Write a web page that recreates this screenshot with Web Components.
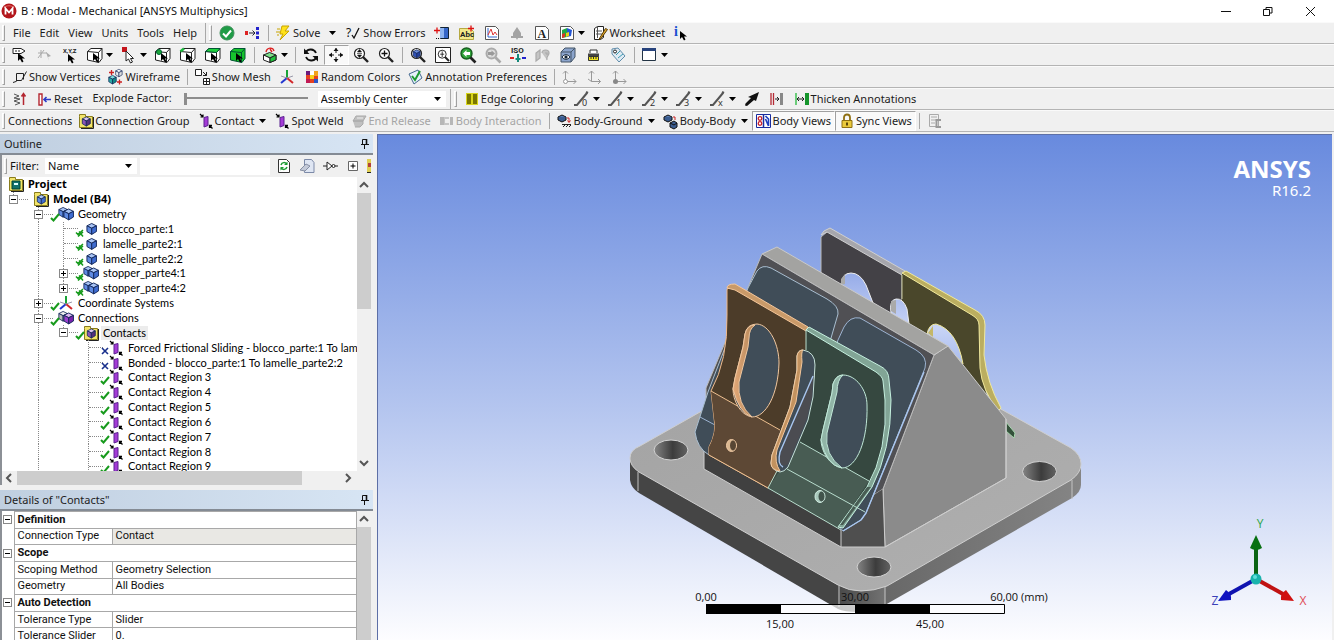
<!DOCTYPE html>
<html lang="en">
<head>
<meta charset="utf-8">
<title>B : Modal - Mechanical [ANSYS Multiphysics]</title>
<style>
  html, body { height: 100%; margin: 0; }
  body { overflow: hidden; background: #f0f0f0; }
</style>
</head>
<body>
<mech-app></mech-app>

<script>
// ---------- icons (16 x 16 unless noted) ----------
const cube = (x, y, s, top, left, right) =>
  `<g transform="translate(${x} ${y}) scale(${s})" stroke="#14285a" stroke-width="1" stroke-linejoin="round">
    <path d="M6 .5 11 3 6 5.5 1 3z" fill="${top}"/><path d="M1 3l5 2.5V12L1 9z" fill="${left}"/><path d="M11 3 6 5.5V12l5-3z" fill="${right}"/></g>`;
const blueCube = (x, y, s) => cube(x, y, s, "#a9c4f5", "#5f8ae2", "#3f6cd0");
const folder = '<path d="M1.500 3.500V1.500h6v2h7v11h-13z" fill="#f2e46a" stroke="#8a7d1c"/><path d="M15.500 4v11.500H3" fill="none" stroke="#222"/>';
const pointer = (x, y) => `<path transform="translate(${x} ${y})" d="M0 0v8l2-2 2 3.500 1.500-1L4 5.500h3z" fill="#000"/>`;
const selBox = extra => `<path d="M.5 4.500 4 1.500h11v10l-3 4L.5 13zM.5 4.500 11.500 5.500v10M11.500 5.500 15 1.500" fill="#fff" stroke="#222"/>${extra}${pointer(6, 6)}`;
const lens = (body, c = "#222") => `<circle cx="6.500" cy="6.500" r="5" fill="#fff" stroke="${c}" stroke-width="1.200"/><path d="M10 10l5 5" stroke="${c}" stroke-width="2.400"/>${body}`;
const edge = n => `<path d="M0 14h3L13 2" fill="none" stroke="#555" stroke-width="2"/><path d="M12 1l2 1" stroke="#555" stroke-width="2"/><text x="8" y="15" font-size="9" fill="#333" font-family="Noto Sans, sans-serif">${n}</text>`;
const contact = '<path d="M6 4.500l4-1v9l-4 1.500z" fill="#a43bd6" stroke="#5b2390"/><path d="M2 1l3 3M5 1.500V4H2.500" stroke="#000" fill="none" stroke-width="1.200"/><path d="M14.500 15.500 11.500 12.500M11.500 15v-2.500H14" stroke="#000" fill="none" stroke-width="1.300"/>';
const page = '<path d="M1.500 1.500h10l3 3v10h-13z" fill="#fff" stroke="#555"/>';
const coil = y => `<path d="M1 ${y}l4-2 4 2-4 2z" fill="#5b7fb5" stroke="#111"/>`;

const ICONS = {
  app: '<circle cx="8" cy="8" r="7.500" fill="#b3161b"/><path d="M3 5c2-3 8-3 10 0" stroke="#e86a66" fill="none"/><path d="M4.500 11.500v-6l3.500 4 3.500-4v6" fill="none" stroke="#fff" stroke-width="1.800"/>',
  ok: '<circle cx="8" cy="8" r="7" fill="#1f9c46" stroke="#3e8f5a"/><path d="M4 8.500l3 3 5-6" fill="none" stroke="#fff" stroke-width="2"/>',
  tree: '<path d="M1 6h3v4H1z" fill="#d22"/><path d="M5 8h6M8.500 5.500 11 8l-2.500 2.500" stroke="#223" fill="none"/><path d="M12 2h3v3h-3zM12 6.500h3v3h-3zM12 11h3v3h-3z" fill="#22c"/>',
  solve: '<path d="M6 1h7l-4 5h4L4 15l3-6H4z" fill="#ffe21a" stroke="#c8a400"/><path d="M1 4h3M0 7h4M1 10h2" stroke="#c8a400"/>',
  errors: '<text x="0" y="12" font-size="12" fill="#111" font-family="Noto Sans, sans-serif">?</text><path d="M6 10l2 3 5-10" fill="none" stroke="#111" stroke-width="1.300"/>',
  chartAdd: '<path d="M6.500 2.500h8v11h-8z" fill="#3566c8" stroke="#123"/><path d="M6 3h4v10H6z" fill="#8eb4f0"/><path d="M0 5.500h6M3 2.500v6" stroke="#d11" stroke-width="1.300"/><path d="M2 13.500h4" stroke="#111" stroke-dasharray="1 1"/>',
  abc: '<path d="M.5 3.500h11l3 3v8H.5z" fill="#f3e98a" stroke="#b5a941"/><text x="1" y="12" font-size="8" font-weight="700" fill="#222" font-family="Roboto, sans-serif">Abc</text><path d="M9 3.500h6M12 .5v6" stroke="#d11" stroke-width="1.300"/>',
  plot: page + '<path d="M4 3v9h9" stroke="#36c" fill="none"/><path d="M4 10l3-6 2 6 2-3 2 3" stroke="#d33" fill="none"/>',
  tint: '<path d="M8 2l4 6v3h2v2H9l-1 2-1-2H2v-2h2V8z" fill="#a3a3a3"/>',
  text: page + '<text x="3.500" y="12.500" font-size="12" font-weight="700" fill="#222" font-family="Liberation Serif, serif">A</text>',
  contour: page + '<path d="M3 5l5-2v9l-5 1z" fill="#22a845"/><path d="M8 3l5 2-1 6-4 1z" fill="#2456d6"/><path d="M7 8l3-1v4l-3 1z" fill="#e6d21c"/><path d="M3 9l3-1v4l-3 1z" fill="#d8372b"/>',
  sheet: '<path d="M1.500 3.500l3-2h6v11l-3 2h-6z" fill="#fff" stroke="#222"/><path d="M4.500 2v11M3 6h6M3 9h6" stroke="#555"/><path d="M12.500 3.500 7 12.500l-1 2 2-1 6.500-9z" fill="#e5ac2a" stroke="#553a08"/>',
  info: '<text x="1" y="11" font-size="14" font-weight="700" fill="#1b4fd0" font-family="Liberation Serif, serif">i</text>' + pointer(7, 6),
  tagSel: '<path d="M1 1.500h8l4 2.500-4 2.500H1z" fill="#fff" stroke="#222"/><path d="M3 4h6" stroke="#222" stroke-dasharray="2 1"/>' + pointer(6, 6),
  dimSel: '<path d="M1 6h9M4 3v8M1 11l6-8" stroke="#aaa" fill="none"/><path d="M9 5l5 4-3 1 1 4z" fill="#aaa"/>',
  xyz: '<text x="1" y="6" font-size="6" font-weight="700" fill="#222" font-family="Roboto, sans-serif">X,Y,Z</text>' + pointer(6, 7),
  box: selBox(""),
  vertexSel: '<path d="M1 0h5v5H1z" fill="#c4141b"/><path d="M5 4v10l2.500-2 2 4 2-1-2-3.500h3z" fill="#fff" stroke="#222"/>',
  selVert: selBox('<circle cx="4" cy="5" r="2.500" fill="#1da83c" stroke="#063"/>'),
  selEdge: selBox('<path d="M.5 4.500 4 1.500" stroke="#1db53c" stroke-width="2.500"/>'),
  selFace: selBox('<path d="M.5 4.500 4 1.500h11L11.500 5.500z" fill="#1fd13c" stroke="#053"/>'),
  selBody: '<path d="M.5 4.500 4 1.500h11v10l-3 4L.5 13z" fill="#16c42c" stroke="#053"/><path d="M.5 4.500 11.500 5.500v10M11.500 5.500 15 1.500" fill="none" stroke="#053"/>' + pointer(6, 6),
  extend: '<path d="M1.500 8l6-2.500L14 8l-6 3z" fill="#7be089" stroke="#222"/><path d="M1.500 8v5L8 15.500V11zM14 8v5l-6 2.500" fill="#fff" stroke="#222"/><path d="M8 11l6-3v5l-6 2.500z" fill="#1fc33c" stroke="#222"/><path d="M4 5C5 0 11 0 12 4M8 2l2 3" stroke="#d22" fill="none" stroke-width="1.400"/>',
  rotate: '<path d="M13 6C11 1.500 5 1.500 3 5M3 10c2 4.500 8 4.500 10 1" fill="none" stroke="#111" stroke-width="1.800"/><path d="M1 1.500V7h5.500zM15 14.500V9H9.500z" fill="#111"/>',
  pan: '<path d="M8 1v5M8 10v5M1 8h5M10 8h5" stroke="#111" stroke-dasharray="2 1"/><path d="M8 1l2.500 3h-5zM8 15l2.500-3h-5zM1 8l3-2.500v5zM15 8l-3-2.500v5z" fill="#111"/>',
  zoom: lens('<path d="M6.500 2.500l2 2.500h-4zM6.500 10.500l2-2.500h-4zM4 6.500h5" fill="#111" stroke="#111" stroke-width=".6"/>'),
  zoomIn: lens('<path d="M3.500 6.500h6M6.500 3.500v6" stroke="#111" stroke-width="1.300"/>'),
  fit: lens(cube(2.500, 2.500, .7, "#6d8ede", "#2f50b8", "#243f9c")),
  zoomBox: '<path d="M.5 .5h15v15H.5z" fill="#fff" stroke="#222"/><g transform="translate(2 2) scale(.8)">' + lens('<path d="M6.500 3v7M4 6.500h5" stroke="#111"/>') + '</g>',
  prev: '<circle cx="6.500" cy="6.500" r="5.500" fill="#2fa53a" stroke="#165e1e" stroke-width="1.400"/><path d="M10.500 10.500l5 5" stroke="#222" stroke-width="2.600"/><path d="M6.500 3 3 6.500 6.500 10V8H10V5H6.500z" fill="#fff"/>',
  next: '<circle cx="6.500" cy="6.500" r="5" fill="#ddd" stroke="#aaa" stroke-width="2"/><path d="M10.500 10.500l5 5" stroke="#aaa" stroke-width="2.600"/><path d="M6.500 3.500 10 6.500 6.500 9.500V8H3V5h3.500z" fill="#999"/>',
  iso: '<text x="1" y="6" font-size="8" font-weight="700" fill="#222" font-family="Roboto, sans-serif">ISO</text><path d="M8 7v8M5.500 12h5" stroke="#178a7a" stroke-width="2"/><path d="M0 10h4v2H0z" fill="#d22"/><path d="M12 10h4v2h-4z" fill="#22c"/>',
  look: '<path d="M5 3v8l-4 3V6zM7 6c0-4 7-4 7 0 0 3-3 3-2 7M10 6h2v2" fill="#c4c4c4" stroke="#aaa" stroke-width="1.200"/>',
  viewCube: '<path d="M1 5l4-4h10v9l-4 5H1z" fill="#8ba4cc" stroke="#456"/><path d="M1 5h10v10M11 5l4-4" fill="none" stroke="#456"/><path d="M2 10c2-3 6-3 8 0-2 3-6 3-8 0z" fill="#fff" stroke="#123"/><circle cx="6" cy="10" r="1.600" fill="#123"/>',
  ruler: '<path d="M5 6V3h7v3" fill="#fff" stroke="#333"/><path d="M3 6.500h11v3H3z" fill="#444"/><path d="M3.500 9.500h10v4h-10z" fill="#f1e31b" stroke="#333"/><path d="M6 10v2M8.500 10v2M11 10v2" stroke="#333"/>',
  tag: '<path d="M2 2l6-1 7 8-6 6-7-8z" fill="#dfeaf3" stroke="#5f8dab"/><circle cx="5" cy="4.500" r="1.500" fill="#fff" stroke="#222"/><path d="M6 8l4-4M8 11l5-4" stroke="#3a9bb0"/>',
  windows: '<path d="M.5 1.500h13v12H.5z" fill="#fff" stroke="#234"/><path d="M0 1h14v3H0z" fill="#26427c"/>',
  vertices: '<path d="M4.500 4.500h7v6M4.500 4.500v8M1 13.500l3-1M4.500 11.500h5l5-9" fill="none" stroke="#222"/>',
  wire: cube(7, 0, .65, "#fff", "#eee", "#ddd") + cube(0, 6, .75, "#7ee0dc", "#29aaa6", "#118a86") + '<path d="M1 3.500h5M3.500 1v5M9 13h5M11.500 10.500v5" stroke="#c22" stroke-width="1.300"/>',
  mesh: '<path d="M.5 .5h6v6h-6z" fill="#fff" stroke="#222"/><path d="M11.500 3v3.500H8M8 3l3.500 3.500" stroke="#222" fill="none"/><path d="M8.500 9.500h6v6h-6zM11.500 9.500v6M8.500 12.500h6" fill="#fff" stroke="#222"/>',
  axes: '<path d="M8 1v8" stroke="#19a336" stroke-width="2"/><path d="M8 9l-6 5" stroke="#2338d0" stroke-width="2"/><path d="M8 9l6 5" stroke="#d2272b" stroke-width="2"/><path d="M2 7l6 2 6-2" stroke="#99a" fill="none"/>',
  colors: '<path d="M2 2h12v12H2z" fill="#e6401e"/><path d="M2 2h4v4H2z" fill="#6a1a7c"/><path d="M6 6h4v4H6z" fill="#f6d21c"/><path d="M10 2h4v5h-4z" fill="#f3a21b"/><path d="M6 2h4v4H6z" fill="#fff"/><path d="M2 10h4v4H2z" fill="#c11a54"/><path d="M10 10h4v4h-4z" fill="#2a56c8"/>',
  annot: '<path d="M1 5l9-4 4 8-8 6z" fill="#e6f1fa" stroke="#456a90"/><path d="M4 7l3 4 5-9" fill="none" stroke="#1e9b32" stroke-width="2"/>',
  ax1: '<path d="M3.500 12.500V2M1 4.500 3.500 2 6 4.500M5 12.500h9M11.500 10l2.500 2.500-2.500 2.500" fill="none" stroke="#999"/><circle cx="3.500" cy="12.500" r="2" fill="#fff" stroke="#999"/>',
  ax2: '<path d="M4.500 12.500V2M2 4.500 4.500 2 7 4.500M1 10l3.500 2.500h9M11 10l2.500 2.500-2.500 2.500" fill="none" stroke="#999"/>',
  ax3: '<path d="M3.500 12.500V2M1 4.500 3.500 2 6 4.500M5 12.500h9M11.500 10l2.500 2.500-2.500 2.500" fill="none" stroke="#999"/><circle cx="3.500" cy="12.500" r="2.500" fill="#888"/>',
  explode: '<path d="M2 3l5 2-5 2 6 1-6 2 6 2-5 2" fill="none" stroke="#555"/><path d="M11.500 14V3M9.500 5.500l2-3 2 3" stroke="#b32630" fill="none" stroke-width="1.500"/>',
  reset: '<path d="M2 3h3v11H2z" fill="#fff" stroke="#b32630" stroke-width="1.400"/><path d="M7 8.500h7M9.500 6 7 8.500 9.500 11" stroke="#2a3bc8" fill="none" stroke-width="1.600"/>',
  edgeColor: '<path d="M2 2h12v12H2z" fill="#d9d61c"/><path d="M3 3h4v10H3zM9 3h4v10H9z" fill="#7a7700"/>',
  e0: edge("0"), e1: edge("1"), e2: edge("2"), e3: edge("3"), ex: edge("x"),
  arrowBig: '<path d="M15 1 12 10l-2-1-7 6-2-.5.500-2L7 7 4 6z" fill="#111"/>',
  thinL: '<path d="M2 2v12M4.500 2v12" stroke="#b52b35" stroke-width="1.300"/><path d="M6 8h4M8 6l2 2-2 2" stroke="#222" fill="none"/><path d="M11 2h3v12h-3z" fill="#888"/>',
  thick: '<path d="M2 2v12" stroke="#22b93a" stroke-width="1.300"/><path d="M3 8h7M5 6 3 8l2 2M8 6l2 2-2 2" stroke="#222" fill="none"/><path d="M11 2h4v12h-4z" fill="#15952b"/>',
  group: folder + cube(3.500, 3.500, .8, "#d9c3ee", "#8b55b8", "#55307c"),
  contact,
  endRelease: '<path d="M4 3h10l-3 5H1zM1 8h10v3l-3 3H3" fill="#b5b5b5" stroke="#999"/><path d="M5 5h6" stroke="#eee"/>',
  interaction: '<path d="M1 4h4v8H1zM11 4h3v8h-3z" fill="#aaa"/><path d="M6 5h4M6 11h4M5 4v8" stroke="#aaa" stroke-width="1.500"/>',
  ground: coil(4) + '<path d="M1 4v3l4 2 4-2V4" fill="#3a5c90" stroke="#111"/><path d="M10 5h2v4M10.500 7.500 12 9.500l1.500-2" stroke="#c22" fill="none"/><path d="M5 11.500h9M6 14l2-2M9 14l2-2M12 14l2-2" stroke="#222"/>',
  bodyBody: coil(4) + '<path d="M1 4v3l4 2 4-2V4" fill="#3a5c90" stroke="#111"/><path d="M10 4h2v3" stroke="#c22" fill="none"/><path d="M7 10l4-2 3 2v4l-3 2-4-2z" fill="#3a5c90" stroke="#111"/><path d="M7 10l4 2 3-2" fill="none" stroke="#111"/>',
  bodyViews: '<path d="M.5 1.500h14v13H.5z" fill="#fff" stroke="#1a2c9e"/><path d="M7.500 1v14" stroke="#1a2c9e" stroke-width="1.500"/><circle cx="4" cy="5.500" r="1.800" fill="none" stroke="#c8202a" stroke-width="1.300"/><circle cx="4" cy="10.500" r="1.800" fill="none" stroke="#c8202a" stroke-width="1.300"/><path d="M9.500 3l3 3v7M9.500 6l3 7" stroke="#1c3ec0" fill="none" stroke-width="1.600"/>',
  lock: '<path d="M5 8V4.500c0-4 6-4 6 0V8" fill="none" stroke="#8f7013" stroke-width="1.800"/><path d="M3 7.500h10v7H3z" fill="#eac93c" stroke="#8f7013"/><path d="M8 9.500v3" stroke="#5b4607" stroke-width="2"/>',
  report: '<path d="M2.500 1.500h9v12h-9zM4 4h6M4 7h6M4 10h4" fill="none" stroke="#aaa"/><path d="M14 7H9.500v7H14" fill="none" stroke="#999" stroke-width="2"/>',
  pin: '<path d="M5.500 3.500h4v5h-4zM4 8.500h8M7.500 9v4" fill="none" stroke="#111"/><path d="M9.500 3v6" stroke="#111" stroke-width="1.600"/>',
  refresh: '<path d="M2.500 1.500h8l3 3v10h-11z" fill="#fff" stroke="#333"/><path d="M5 7c1-3 4-3 6-1M11 9c-1 3-4 3-6 1" fill="none" stroke="#1c9a33" stroke-width="1.500"/><path d="M11.500 3.500v3.500H8zM4.500 12.500V9H8z" fill="#1c9a33"/>',
  clear: '<path d="M5.500 1.500h7l2.500 3v10H5.500z" fill="#dfe6f3" stroke="#7c8aa8"/><path d="M1 12l6-6 4 2-5 5z" fill="#c4cad8" stroke="#8790a4"/>',
  filter: '<path d="M1 8h4M13 8h3M5 4v8l5-4z" fill="#fff" stroke="#222"/><circle cx="11.500" cy="8" r="1.500" fill="#fff" stroke="#222"/>',
  plus: '<path d="M3.500 3.500h9v9h-9z" fill="#fff" stroke="#666"/><path d="M5.500 8h5M8 5.500v5" stroke="#000"/>',
  project: folder + '<path d="M4 5h8v8H4z" fill="#12716c" stroke="#043"/><path d="M6 7h4v2H6z" fill="#dff"/>',
  model: folder + blueCube(3.500, 3.500, .8),
  body: blueCube(3, 2, .950),
  bodies: blueCube(0, 1, .850) + blueCube(5, 2.500, .950),
  connections: cube(0, 1, .850, "#eee", "#bbb", "#999") + cube(5, 2.500, .950, "#ddb7f2", "#9a3fce", "#7a22ad"),
  tick: '<path d="M1 11l2.500 2.500L9 7" fill="none" stroke="#179a1c" stroke-width="2"/>',
  tickX: '<path d="M1 10.500l2 2L8 8M3 14.500l5-4.500M4 9.500l4 5" fill="none" stroke="#179a1c" stroke-width="1.500"/>',
  cross: '<path d="M2 8l6 6M8 8l-6 6" fill="none" stroke="#182f8c" stroke-width="1.600"/>',
};
const icon = (name, cls = "icon") => `<svg class="${cls}" width="16" height="16" viewBox="0 0 16 16" aria-hidden="true">${ICONS[name]}</svg>`;
const caret = '<svg class="caret" width="7" height="4" viewBox="0 0 7 4" aria-hidden="true"><path d="M0 0h7L3.500 4z"/></svg>';

const define = (name, html) =>
  customElements.define(name, class extends HTMLElement {
    constructor() {
      super();
      this.attachShadow({ mode: "open" });
    }
    connectedCallback() {
      this.shadowRoot.innerHTML = typeof html === "function" ? html(this) : html;
    }
  });

// ---------- toolbar pieces ----------
define("tool-button", el => {
  const labelled = el.textContent.trim() !== "";
  return `
  <style>
    :host { display: block; flex: none; }
    button { display: flex; align-items: center; height: 20px; margin: 0; border: 1px solid transparent; background: none;
      color: #1c1c1c; font: inherit; white-space: nowrap; padding: 0 ${labelled ? 3 : 4}px 0 3px; }
    button.plain { padding: 0 3px 0 4px; }
    button.menu { padding-right: 3px; }
    .icon { flex: none; margin-right: ${labelled ? 1 : 0}px; overflow: visible; }
    .caret { flex: none; margin-left: ${labelled ? 5 : 3}px; }
    :host([split]) .caret { margin: 0 2px 0 9px; }
    :host([pressed]) button { background: #f9f9f9; border-color: #a0a0a0 #fff #fff #a0a0a0; }
    :host([off]) button { color: #a5a5a5; }
    :host([off]) .icon { opacity: .8; }
  </style>
  <button class="${el.hasAttribute("menu") ? "menu" : ""} ${el.hasAttribute("icon") ? "" : "plain"}"
    aria-label="${el.textContent || el.getAttribute("icon")}" ${el.hasAttribute("off") ? "disabled" : ""}>
    ${el.hasAttribute("icon") ? icon(el.getAttribute("icon")) : ""}<slot></slot>${el.hasAttribute("menu") ? caret : ""}
  </button>`;
});

define("tool-sep", `<style>
  :host { flex: none; width: 1px; height: 16px; margin: 0 3px; background: #a8a8a8; }
</style>`);

define("tool-grip", `<style>
  :host { flex: none; box-sizing: border-box; width: 3px; height: 16px; margin: 0 3px 0 2px;
    border: 1px solid; border-color: #fff #a0a0a0 #a0a0a0 #fff; }
</style>`);

define("tool-end", `<style>
  :host { flex: none; width: 1px; height: 21px; margin: 0 1px 0 4px; background: #a8a8a8; }
</style>`);

define("tool-row", `<style>
  :host { display: flex; align-items: center; box-sizing: border-box; height: 22px; overflow: hidden;
    border-bottom: 1px solid #b4b4b4; border-top: 1px solid #fafafa; }
</style><slot></slot>`);

define("pick-list", el => `<style>
    :host { display: flex; position: relative; align-items: center; flex: none; background: #fff; }
    select { appearance: none; width: 100%; height: 16px; border: 0; padding: 0 16px 0 3px; background: none;
      font: inherit; color: #111; }
    .caret { position: absolute; right: 5px; pointer-events: none; }
  </style>
  <select aria-label="${el.getAttribute("label")}"><option>${el.getAttribute("value")}</option></select>${caret}`);

define("explode-slider", `<style>
    :host { display: flex; flex: none; align-items: center; gap: 12px; padding: 0 10px 0 6px; }
    label { padding-bottom: 2px; }
    input { appearance: none; width: 124px; height: 12px; margin: 0; background: linear-gradient(#8c8c8c, #8c8c8c) 0 4px / 100% 2px no-repeat; }
    input::-webkit-slider-thumb { appearance: none; width: 3px; height: 12px; background: #8c8c8c; }
  </style>
  <label for="factor">Explode Factor:</label><input id="factor" type="range" value="0">`);

// ---------- title bar ----------
define("title-bar", `<style>
    :host { display: flex; align-items: center; height: 22px; padding-right: 3px; background: #fff; color: #111; }
    .icon { margin: 0 4px 0 1px; }
    h1 { flex: 1; margin: 0; font: 11px/16px "Noto Sans", sans-serif; }
    button { width: 42px; height: 20px; padding: 0; border: 0; background: none; }
    button svg { display: block; margin: auto; }
  </style>
  ${icon("app")}<h1><slot></slot></h1>
  <button aria-label="Minimize"><svg width="11" height="11"><path d="M0 5.500h10" stroke="#111"/></svg></button>
  <button aria-label="Restore"><svg width="11" height="11"><path d="M.5 3.500h6v6h-6zM3 3V1.500h6V7H7" fill="none" stroke="#111"/></svg></button>
  <button aria-label="Close"><svg width="11" height="11"><path d="M1 1l9 9M10 1l-9 9" stroke="#111"/></svg></button>`);

// ---------- docked panels ----------
define("dock-panel", el => `<style>
    :host { display: flex; flex-direction: column; min-width: 0; min-height: 0; background: #f0f0f0; }
    header { display: flex; flex: none; align-items: center; justify-content: space-between; box-sizing: border-box; height: 21px;
      padding: 0 0 0 4px; border-bottom: 2px solid #848b94; background: linear-gradient(90deg, #c0cfe0, #d7e5f4); }
    h2 { margin: 0; font: 11px/16px "Noto Sans", sans-serif; color: #222; }
    button { padding: 0; border: 0; background: none; height: 16px; }
    .content { flex: 1; min-height: 0; display: flex; flex-direction: column; padding-right: 2px; border-left: 2px solid #8c9096; }
  </style>
  <header><h2>${el.getAttribute("heading")}</h2><button aria-label="Pin panel">${icon("pin")}</button></header>
  <div class="content"><slot></slot></div>`);

define("scroll-rail", el => {
  const flat = el.hasAttribute("flat");
  const arrow = d => `<svg width="10" height="10" viewBox="0 0 10 10"><path d="${d}" fill="none" stroke="#555" stroke-width="2"/></svg>`;
  return `<style>
    :host { display: flex; flex: none; flex-direction: ${flat ? "row" : "column"}; align-items: center; justify-content: space-between;
      background: #f0f0f0; gap: 3px; ${flat ? "height: 14px; padding: 0 4px 0 2px;" : "width: 14px; padding: 3px 0;"} }
    :host([open-end]) { padding-bottom: 0; }
    svg { flex: none; }
    .track { flex: 1; min-height: 0; min-width: 0; align-self: stretch; display: flex; flex-direction: inherit; }
    .thumb { background: #cdcdcd; flex: 0 0 var(--thumb); }
  </style>
  ${arrow(flat ? "M7 1 3 5l4 4" : "M1 7l4-4 4 4")}
  <div class="track"><div class="thumb"></div></div>
  ${el.hasAttribute("open-end") ? "" : arrow(flat ? "M3 1l4 4-4 4" : "M1 3l4 4 4-4")}`;
});

// ---------- outline ----------
// level, expander, status, icon, label
const NODES = [
  [0, "", "", "project", "Project"],
  [1, "-", "", "model", "Model (B4)"],
  [2, "-", "tick", "bodies", "Geometry"],
  [3, "", "tickX", "body", "blocco_parte:1"],
  [3, "", "tickX", "body", "lamelle_parte2:1"],
  [3, "", "tickX", "body", "lamelle_parte2:2"],
  [3, "+", "tickX", "bodies", "stopper_parte4:1"],
  [3, "+", "tickX", "bodies", "stopper_parte4:2"],
  [2, "+", "tick", "axes", "Coordinate Systems"],
  [2, "-", "tick", "connections", "Connections"],
  [3, "-", "tick", "group", "Contacts"],
  [4, "", "cross", "contact", "Forced Frictional Sliding - blocco_parte:1 To lamelle_parte2:1"],
  [4, "", "cross", "contact", "Bonded - blocco_parte:1 To lamelle_parte2:2"],
  ...[3, 4, 5, 6, 7, 8, 9].map(n => [4, "", "tick", "contact", "Contact Region " + n]),
];

// does the branch that hangs from this level go on below row i?
// levels 2 and 4 have more rows past the last one listed
const goesOn = (i, level) => {
  for (let j = i + 1; j < NODES.length; j++) {
    if (NODES[j][0] === level) return true;
    if (NODES[j][0] < level) return false;
  }
  return level === 2 || level === 4;
};

define("outline-tree", () => `<style>
    :host { display: grid; flex: 1; min-height: 0; grid-template: minmax(0, 1fr) auto / minmax(0, 1fr) auto; background: #fff; }
    .view { overflow: hidden; }
    .corner { background: #f0f0f0; }
    ul { display: flex; flex-direction: column; height: 297px; margin: 0; padding: 0; list-style: none; }
    li { display: flex; flex: 1; min-height: 0; align-items: center; white-space: nowrap; color: #000; font: 11px/14px Lato, sans-serif; }
    .guide { flex: none; align-self: stretch; width: 25px; }
    .rail { background: repeating-linear-gradient(#888 0 1px, transparent 1px 2px) 11px 0 / 1px 100% no-repeat; }
    .half { background-size: 1px 50%; }
    .joint { display: flex; align-items: center; position: relative; margin-right: 6px; }
    .joint::after { content: ""; position: absolute; left: 12px; width: 14px; border-top: 1px dotted #888; }
    button { position: relative; z-index: 1; display: block; width: 9px; height: 9px; margin-left: 7px; padding: 0; border: 1px solid #888; background: #fff; }
    button svg { display: block; }
    .status { position: absolute; left: 23px; top: 0; z-index: 1; overflow: visible; }
    .icon { flex: none; margin-right: 2px; overflow: visible; }
    .label { padding: 0 2px; }
    .strong { font-weight: 700; font-family: "Noto Sans", sans-serif; }
    .picked { background: #ececec; }
    .root { padding-left: 6px; }
  </style>
  <div class="view"><ul role="tree" aria-label="Outline">
    ${NODES.map(([level, mark, status, pic, label], i) => {
      let guides = "";
      for (let g = 1; g < level; g++) guides += `<span class="guide ${goesOn(i, g) ? "rail" : ""}"></span>`;
      if (level) guides += `<span class="guide joint rail ${goesOn(i, level) ? "" : "half"}">
        ${mark ? `<button aria-label="${mark === "+" ? "Expand" : "Collapse"}"><svg width="7" height="7"><path d="M1 3.500h5${mark === "+" ? "M3.500 1v5" : ""}" stroke="#000"/></svg></button>` : ""}
        ${status ? icon(status, "status") : ""}</span>`;
      return `<li role="treeitem" class="${level ? "" : "root"}">${guides}${icon(pic)}
        <span class="label ${level < 2 ? "strong" : ""} ${label === "Contacts" ? "picked" : ""}">${label}</span></li>`;
    }).join("")}
  </ul></div>
  <scroll-rail style="--thumb: 116px"></scroll-rail>
  <scroll-rail flat style="--thumb: 285px"></scroll-rail><div class="corner"></div>`);

define("outline-filter", `<style>
    :host { display: flex; flex: none; align-items: center; height: 22px; overflow: hidden; color: #111; }
    label { margin: 0 6px 0 0; }
    pick-list { width: 92px; margin-right: 3px; }
    input { flex: 1; min-width: 0; box-sizing: border-box; height: 17px; margin-right: 2px; padding: 0; border: 0; background: #fff; }
    tool-button { margin-right: -2px; }
    svg { flex: none; margin-left: 3px; }
  </style>
  <tool-grip></tool-grip><label for="find">Filter:</label>
  <pick-list label="Filter by" value="Name"></pick-list>
  <input id="find" type="text">
  <tool-button icon="refresh"></tool-button><tool-button icon="clear"></tool-button><tool-button icon="filter"></tool-button><tool-button icon="plus"></tool-button>
  <svg width="4" height="16"><path d="M0 1h4v14H0z" fill="#e0cf52"/><path d="M1 5h3v4H1z" fill="#b3413a"/><path d="M0 14.500h4" stroke="#222"/></svg>`);

// ---------- details ----------
const DETAILS = [
  ["Definition"], ["Connection Type", "Contact"],
  ["Scope"], ["Scoping Method", "Geometry Selection"], ["Geometry", "All Bodies"],
  ["Auto Detection"], ["Tolerance Type", "Slider"], ["Tolerance Slider", "0."],
];

define("details-grid", () => `<style>
    :host { display: flex; flex: 1; min-height: 0; overflow: hidden; }
    .sheet { flex: 1; min-width: 0; background: #fff; }
    table { width: 100%; height: 134px; border-collapse: collapse; table-layout: fixed; color: #111; font: 11px/14px Roboto, sans-serif; }
    th, td { padding: 0 3px; border: 1px solid #a8a8a8; text-align: left; font-weight: 400; white-space: nowrap; }
    .gutter { padding: 0 1px; border-width: 0; }
    .group { font-weight: 700; }
    .locked { background: #e9e8e4; }
    button { display: block; width: 9px; height: 9px; padding: 0; border: 1px solid #888; background: #fff; }
    button svg { display: block; }
  </style>
  <div class="sheet"><table>
    <colgroup><col style="width: 12px"><col style="width: 98px"><col></colgroup>
    ${DETAILS.map(([name, value], i) => value === undefined
      ? `<tr><td class="gutter"><button aria-label="Collapse"><svg width="7" height="7"><path d="M1 3.500h5" stroke="#000"/></svg></button></td><th class="group" colspan="2">${name}</th></tr>`
      : `<tr><td class="gutter"></td><th scope="row">${name}</th><td class="${i === 1 ? "locked" : ""}">${value}</td></tr>`).join("")}
  </table></div>
  <scroll-rail open-end style="--thumb: 100%"></scroll-rail>`);

// ---------- 3D view ----------
define("model-view", `<style>
    :host { display: block; position: relative; overflow: hidden; box-sizing: border-box; border: solid #5d6fa6; border-width: 1px 0 0 1px;
      background: linear-gradient(#688ade, #b4c5ef 54%, #fdfdff); }
    .scene { display: block; width: 100%; height: 100%; }
    .brand { position: absolute; top: 20px; right: 21px; text-align: right; color: #fff; font: 15px/14px "Noto Sans", sans-serif; }
    .brand b { display: block; font: 700 24px/28px "Noto Sans", sans-serif; }
  </style>
  <svg class="scene" viewBox="378 135 954 505" preserveAspectRatio="xMidYMid meet" role="img" aria-label="Model">
    <defs>
      <linearGradient id="hole"><stop offset="0" stop-color="#858585"/><stop offset=".55" stop-color="#3c3c3c"/><stop offset="1" stop-color="#636363"/></linearGradient>
      <linearGradient id="side"><stop offset="0" stop-color="#686868"/><stop offset="1" stop-color="#858585"/></linearGradient>
      <linearGradient id="round"><stop offset="0" stop-color="#484848"/><stop offset="1" stop-color="#737373"/></linearGradient>
      <linearGradient id="plate" x1="0" y1="0" x2="1" y2="1"><stop offset="0" stop-color="#a3a3a3"/><stop offset="1" stop-color="#b0b0b0"/></linearGradient>
      <linearGradient id="sky" gradientUnits="userSpaceOnUse" x1="0" y1="270" x2="0" y2="365"><stop offset="0" stop-color="#93a9e7"/><stop offset=".6" stop-color="#c8d4f6"/><stop offset="1" stop-color="#a9bcec"/></linearGradient>
      <linearGradient id="rim"><stop offset="0" stop-color="#e2a878"/><stop offset="1" stop-color="#b38658"/></linearGradient>
    </defs>
    <g stroke-linejoin="round" stroke-width="1">
      <!-- base plate -->
      <path d="M630 458v22q1 8 9 13l199 116v-24z" fill="#454545"/>
      <path d="M838 584v25q6 3 20 3 17-1 27-7v-21z" fill="url(#round)"/>
      <path d="M885 584v21l187-107q9-6 9-13v-23z" fill="url(#side)"/>
      <path d="M640 446 760 378H945L1071 448Q1081 455 1081 464T1071 480L887 586Q874 591 861 591 849 591 838 585L639 472Q630 466 630 458T640 446z" fill="url(#plate)" stroke="#cfcfcf"/>
      <path d="M638 472v19M839 586v21M885 587v18M1072 480v19" stroke="#c4c4c4" fill="none"/>
      <g fill="url(#hole)" stroke="#d2d2d2"><ellipse cx="671" cy="450" rx="17" ry="10"/><ellipse cx="1039.500" cy="471.500" rx="17" ry="10"/><ellipse cx="874" cy="567" rx="17" ry="10"/></g>
      <!-- rear plates -->
      <path d="M821 237 828 231 902 273V325L821 275z" fill="#434146" stroke="#bbb"/>
      <path d="M821 235 824 231 830 228 905 271 902 275 827 232z" fill="#a6a6ac" stroke="#d0d0d0"/>
      <path d="M902 273 972 314Q979 318 979 325L980 368 987 396 902 325z" fill="#4a472b"/>
      <path d="M902 273 906 271 975 310Q985 315 985 325L984 355Q987 383 1001 408L998 411Q982 390 980 368L979 325Q979 319 972 315z" fill="#bbae60" stroke="#f1e99b"/>
      <path d="M902 275v24" stroke="#c9c9a0"/>
      <path d="M841 285Q842 273 851 273T866 285L873 303z" fill="url(#sky)" stroke="#eee"/>
      <path d="M841 279l4-5v10l-4 1z" fill="#aaa"/>
      <path d="M891 313Q889 300 896 299T907 309L909 324z" fill="url(#sky)" stroke="#eee"/>
      <path d="M891 301l5-1v14l-5-3z" fill="#aaa"/>
      <path d="M927 334Q929 324 936 324 957 330 963 364L947 346z" fill="url(#sky)" stroke="#f1e99b"/>
      <path d="M928 333l5-7v11z" fill="#c4b768"/>
      <path d="M1006 422l9 11-1 5-8-7z" fill="#35523c" stroke="#a7d6ae"/>
      <!-- wedge block -->
      <path d="M934 355 948 346 1006 419V478L885 547 883 489z" fill="#8b8b8b" stroke="#c9c9c9"/>
      <path d="M762 254 777 247 948 346 934 355z" fill="#a3a3a1" stroke="#c9c9c9"/>
      <path d="M762 254 934 355 883 489 866 500 840 527 700 445 706 402V388z" fill="#505054" stroke="#bbb"/>
      <path d="M704 449v20l137 78v-20z" fill="#404040"/>
      <path d="M841 529 861 520 866 500 883 489 885 547H841z" fill="#4f4f4f"/>
      <path d="M704 451v18l137 78h44M841 530v17M883 489l2 58M1006 419v59L885 547" stroke="#cdcdcd" fill="none"/>
      <!-- blue pads -->
      <path d="M748 288 757 271Q762 264 771 268L827 299Q839 306 838 314L829 345 790 430 709 455Q697 448 695 432L708 392z" fill="#404d58" stroke="#a9bed0"/>
      <path d="M838 340 844 327Q850 316 860 318L916 350Q928 357 925 368L866 513 861 520 843 531 790 470z" fill="#404d58" stroke="#9db4d2"/>
      <path d="M924 372 866 513 861 520 843 531" stroke="#a9c6ef" fill="none" stroke-width="1.400"/>
      <path d="M700 417l15 8" stroke="#9db4d2" fill="none"/>
      <!-- orange stopper -->
      <path d="M727 289 735 286 807 328V350L815 375 790 460 768 488 709 455V447Q717 432 714 418L711 391Q728 360 727 315z" fill="#4c3c29" stroke="#f0b989"/>
      <path d="M711 391 781 431 790 460 768 488 709 455V447Q717 432 714 418z" fill="#5d4835"/>
      <path d="M711 391 780 430M709 455 768 488" stroke="#eec091" fill="none"/>
      <path d="M727 288Q727 284 735 284L808 327 806 331 735 290z" fill="#c99a69" stroke="#f5c79b"/>
      <path d="M745 334Q747 324 757 324C770 325 779 345 779 363 778 395 766 417 752 417 740 415 733 400 733 389L735 378 743 347z" fill="#404d58" stroke="#f0c79f"/>
      <path d="M745 334Q747 325 755 325 749 329 749 338L748 347 739 382Q737 404 752 417 739 413 733 389L735 378 743 347z" fill="url(#rim)" stroke="#f0c79f"/>
      <ellipse cx="731.500" cy="445.500" rx="5" ry="6" fill="#d9b791" stroke="#f2cba5"/><ellipse cx="733" cy="445.500" rx="3" ry="5" fill="#574634"/>
      <!-- green stopper -->
      <path d="M806 330 876 371Q885 376 885 390 887 455 867 487L838 528 768 488 787 455 813 390 815 372 806 352z" fill="#364840"/>
      <path d="M800 442 869 481 838 528 768 488 787 460z" fill="#485c53"/>
      <path d="M806 330 809 327 880 366Q889 370 889 380L891 400Q891 450 872 487L843 528 838 527 867 487Q888 450 885 400L883 381Q883 377 876 372z" fill="#82a596" stroke="#c5f0df"/>
      <path d="M871 487 843 525 840 525 867 487z" fill="#485c53"/>
      <path d="M800 442 869 481M787 469 865 512M768 488 841 530M768 488 777 471M806 330v20" stroke="#b9ddce" fill="none"/>
      <path d="M833 384Q836 375 843 375C856 375 867 390 867 405 868 440 857 468 842 468 829 466 821 450 821 440L823 430 832 393z" fill="#404d58" stroke="#c0e8d8"/>
      <path d="M833 384Q836 375 843 375 837 380 837 392L827 433Q824 455 842 468 826 465 821 440L823 430 832 393z" fill="#91b5a7" stroke="#c0e8d8"/>
      <ellipse cx="820" cy="496.500" rx="5" ry="6" fill="#a9c9bc" stroke="#d5f0e5"/><ellipse cx="821.500" cy="496.500" rx="3" ry="5" fill="#42544c"/>
      <!-- slot between the stoppers -->
      <path d="M797 356Q798 350 803 350 815 352 815 365L813 397 808 420 788 467Q784 472 780 472 771 470 771 463L772 455 790 407 797 370z" fill="#404d58" stroke="#c7e2da"/>
      <path d="M813 376 781 452 779 462Q784 468 788 464L807 418 812 397z" fill="#4b4c51"/>
      <path d="M797 356Q798 350 803 350 801 352 802 362L796 402 777 450Q774 462 780 471 771 470 771 463L772 455 790 407 797 370z" fill="#c2925f" stroke="#f5c79b"/>
      <path d="M813 376 780 452Q777 464 783 467" stroke="#a9c6ef" fill="none" stroke-width="1.400"/>
    </g>
    <!-- scale -->
    <g>
      <path d="M706.500 604.500h298v9h-298z" fill="none" stroke="#000"/>
      <path d="M781 605h74v8h-74zM930 605h74v8h-74z" fill="#fff" fill-opacity=".7"/>
      <path d="M706 604h75v10h-75zM855 604h75v10h-75z"/>
      <g font-family="Open Sans, sans-serif" font-size="11" text-anchor="middle" fill="#111">
        <text x="706" y="601">0,00</text><text x="855" y="601">30,00</text><text x="1019" y="601">60,00 (mm)</text>
        <text x="780" y="628">15,00</text><text x="930" y="628">45,00</text>
      </g>
    </g>
    <!-- triad -->
    <g>
      <path d="M1256 578V545" stroke="#0a6414" stroke-width="4"/><path d="M1256 535l6 13q-6 4-12 0z" fill="#087012"/>
      <path d="M1256 579l27 15" stroke="#c01212" stroke-width="4"/><path d="M1294 601l-13-1q-1-6 5-10z" fill="#d01010"/>
      <path d="M1256 579l-27 15" stroke="#1013b0" stroke-width="4"/><path d="M1218 601l13-1q1-6-5-10z" fill="#1013c0"/>
      <circle cx="1256" cy="579" r="5.500" fill="#19b3ad"/><circle cx="1255" cy="577" r="2" fill="#62e0da"/>
      <g font-family="Open Sans, sans-serif" font-size="12" text-anchor="middle">
        <text x="1260" y="528" fill="#2fa548">Y</text><text x="1303" y="605" fill="#e04a55">X</text><text x="1215" y="605" fill="#3a40b8">Z</text>
      </g>
    </g>
  </svg>
  <div class="brand"><b>ANSYS</b>R16.2</div>`);

// ---------- page ----------
const btns = names => names.split(" ").map(n => `<tool-button icon="${n.replace("*", "")}" ${n.endsWith("*") ? "menu" : ""}></tool-button>`).join("");

define("mech-app", `<style>
    :host { display: flex; flex-direction: column; height: 100vh; overflow: hidden; background: #f0f0f0; color: #1c1c1c;
      font: 11px/16px "Noto Sans", sans-serif; }
    main { display: grid; flex: 1; min-height: 0; grid-template-columns: 373px minmax(0, 1fr); gap: 4px; padding: 2px 2px 0 0; }
    aside { display: grid; grid-template: minmax(0, 1fr) 150px / minmax(0, 1fr); gap: 5px; min-height: 0; }
    .origin { width: 128px; }
    .caption { margin-right: 2px; }
    title-bar, tool-row { flex: none; }
  </style>
  <title-bar>B : Modal - Mechanical [ANSYS Multiphysics]</title-bar>
  <tool-row>
    <tool-grip></tool-grip>
    <tool-button>File</tool-button><tool-button>Edit</tool-button><tool-button>View</tool-button><tool-button>Units</tool-button><tool-button>Tools</tool-button><tool-button>Help</tool-button>
    <tool-end></tool-end><tool-grip></tool-grip>
    ${btns("ok tree")}<tool-sep></tool-sep>
    <tool-button icon="solve" menu split>Solve</tool-button><tool-button icon="errors">Show Errors</tool-button>
    ${btns("chartAdd abc plot tint text contour*")}
    <tool-button icon="sheet">Worksheet</tool-button>${btns("info")}
  </tool-row>
  <tool-row>
    <tool-grip></tool-grip>
    ${btns("tagSel dimSel xyz box* vertexSel* selVert selEdge selFace selBody")}<tool-sep></tool-sep>
    ${btns("extend*")}<tool-sep></tool-sep>${btns("rotate")}<tool-button icon="pan" pressed></tool-button>${btns("zoom zoomIn")}<tool-sep></tool-sep>
    ${btns("fit zoomBox prev next iso look viewCube ruler tag")}<tool-sep></tool-sep>${btns("windows*")}
  </tool-row>
  <tool-row>
    <tool-grip></tool-grip>
    <tool-button icon="vertices">Show Vertices</tool-button><tool-button icon="wire">Wireframe</tool-button><tool-sep></tool-sep>
    <tool-button icon="mesh">Show Mesh</tool-button>${btns("axes")}
    <tool-button icon="colors">Random Colors</tool-button><tool-button icon="annot">Annotation Preferences</tool-button><tool-sep></tool-sep>
    ${btns("ax1 ax2 ax3")}
  </tool-row>
  <tool-row>
    <tool-grip></tool-grip>
    ${btns("explode")}<tool-button icon="reset">Reset</tool-button>
    <explode-slider></explode-slider>
    <pick-list class="origin" label="Explode origin" value="Assembly Center"></pick-list>
    <tool-end></tool-end><tool-grip></tool-grip>
    <tool-button icon="edgeColor" menu>Edge Coloring</tool-button>
    ${btns("e0* e1* e2* e3* ex* arrowBig thinL")}<tool-button icon="thick">Thicken Annotations</tool-button>
  </tool-row>
  <tool-row>
    <tool-grip></tool-grip>
    <span class="caption">Connections</span>
    <tool-button icon="group">Connection Group</tool-button><tool-button icon="contact" menu>Contact</tool-button>
    <tool-button icon="contact">Spot Weld</tool-button><tool-button icon="endRelease" off>End Release</tool-button>
    <tool-button icon="interaction" off>Body Interaction</tool-button><tool-sep></tool-sep>
    <tool-button icon="ground" menu>Body-Ground</tool-button><tool-button icon="bodyBody" menu>Body-Body</tool-button>
    <tool-button icon="bodyViews" pressed>Body Views</tool-button><tool-button icon="lock" pressed>Sync Views</tool-button><tool-sep></tool-sep>
    ${btns("report")}
  </tool-row>
  <main>
    <aside>
      <dock-panel heading="Outline"><outline-filter></outline-filter><outline-tree></outline-tree></dock-panel>
      <dock-panel heading='Details of "Contacts"'><details-grid></details-grid></dock-panel>
    </aside>
    <model-view></model-view>
  </main>`);
</script>
</body>
</html>
